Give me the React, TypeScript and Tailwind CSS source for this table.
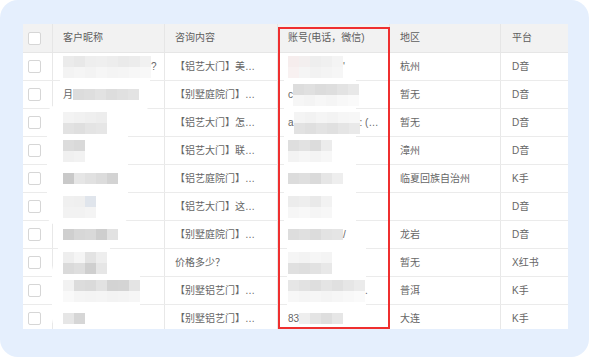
import React from "react";

type Blur = { lead?: string; rows: string[][]; tail?: string };

type Row = {
  name: Blur;
  topic: string;
  account: Blur;
  region: string;
  platform: string;
};

// Pixelated privacy masks: each entry is a row of 11px tiles.
const rows: Row[] = [
  {
    name: {
      rows: [
        ["bg-[#ebebeb]", "bg-[#e8e8e8]", "bg-[#eeeeee]", "bg-[#efefef]", "bg-[#ededed]", "bg-[#eaeaea]", "bg-[#ececec]", "bg-[#f1f1f1]"],
        ["bg-[#f3f3f3]", "bg-[#f5f5f5]", "bg-[#f3f3f3]", "bg-[#f6f6f6]", "bg-[#f4f4f4]", "bg-[#f5f5f5]", "bg-[#f7f7f7]", "bg-[#f8f8f8]"],
      ],
      tail: "?",
    },
    topic: "【铝艺大门】美…",
    account: {
      rows: [
        ["bg-[#f6eded]", "bg-[#f3efef]", "bg-[#eeeeee]", "bg-[#f0f0f0]", "bg-[#f4f4f4]"],
        ["bg-[#f8f1f1]", "bg-[#f5f5f5]", "bg-[#f2f2f2]", "bg-[#f4f4f4]", "bg-[#f6f6f6]"],
      ],
      tail: "'",
    },
    region: "杭州",
    platform: "D音",
  },
  {
    name: {
      lead: "月",
      rows: [["bg-[#dcdcdc]", "bg-[#dedede]", "bg-[#e2e2e2]", "bg-[#dddddd]", "bg-[#e0e0e0]", "bg-[#e3e3e3]"]],
    },
    topic: "【别墅庭院门】…",
    account: {
      lead: "c",
      rows: [
        ["bg-[#dddddd]", "bg-[#e0e0e0]", "bg-[#dcdcdc]", "bg-[#dedede]", "bg-[#e3e3e3]", "bg-[#e8e8e8]"],
        ["bg-[#f6f6f6]", "bg-[#f4f4f4]", "bg-[#f7f7f7]", "bg-[#f5f5f5]", "bg-[#f8f8f8]", "bg-[#fafafa]"],
      ],
    },
    region: "暂无",
    platform: "D音",
  },
  {
    name: {
      rows: [
        ["bg-[#f3f3f3]", "bg-[#f1f1f1]", "bg-[#efefef]", "bg-[#ededed]"],
        ["bg-[#e2e2e2]", "bg-[#dfdfdf]", "bg-[#e4e4e4]", "bg-[#e6e6e6]"],
      ],
    },
    topic: "【铝艺大门】怎…",
    account: {
      lead: "a",
      rows: [
        ["bg-[#f4f4f4]", "bg-[#f2f2f2]", "bg-[#f5f5f5]", "bg-[#f3f3f3]", "bg-[#f6f6f6]", "bg-[#f7f7f7]"],
        ["bg-[#e2e2e2]", "bg-[#dfdfdf]", "bg-[#e3e3e3]", "bg-[#e0e0e0]", "bg-[#e5e5e5]", "bg-[#e9e9e9]"],
      ],
      tail: ": (…",
    },
    region: "暂无",
    platform: "D音",
  },
  {
    name: {
      rows: [
        ["bg-[#dcdcdc]", "bg-[#d9d9d9]"],
        ["bg-[#f0f0f0]", "bg-[#f2f2f2]"],
      ],
    },
    topic: "【铝艺大门】联…",
    account: {
      rows: [
        ["bg-[#dedede]", "bg-[#e2e2e2]", "bg-[#dcdcdc]", "bg-[#ececec]"],
        ["bg-[#f3f3f3]", "bg-[#f6f6f6]", "bg-[#f4f4f4]", "bg-[#f7f7f7]"],
      ],
    },
    region: "漳州",
    platform: "D音",
  },
  {
    name: {
      rows: [["bg-[#c9c9c9]", "bg-[#e6e6e6]", "bg-[#e1e1e1]", "bg-[#dcdcdc]", "bg-[#d3d3d3]"]],
    },
    topic: "【铝艺庭院门】…",
    account: {
      rows: [["bg-[#dcdcdc]", "bg-[#dfdfdf]", "bg-[#dadada]", "bg-[#e6e6e6]", "bg-[#eeeeee]"]],
    },
    region: "临夏回族自治州",
    platform: "K手",
  },
  {
    name: {
      rows: [
        ["bg-[#f0f0f0]", "bg-[#efefef]", "bg-[#e0e5ec]"],
        ["bg-[#f2f2f2]", "bg-[#f2f2f2]", "bg-[#f4f4f4]"],
      ],
    },
    topic: "【铝艺大门】这…",
    account: {
      rows: [
        ["bg-[#ececec]", "bg-[#eeeeee]", "bg-[#e9e9e9]", "bg-[#f2f2f2]"],
        ["bg-[#f6f6f6]", "bg-[#f8f8f8]", "bg-[#f5f5f5]", "bg-[#f7f7f7]"],
      ],
    },
    region: "",
    platform: "D音",
  },
  {
    name: {
      rows: [["bg-[#cfcfcf]", "bg-[#d7d7d7]", "bg-[#d9d9d9]", "bg-[#cecece]", "bg-[#e2e2e2]"]],
    },
    topic: "【别墅庭院门】…",
    account: {
      rows: [["bg-[#dddddd]", "bg-[#e0e0e0]", "bg-[#dcdcdc]", "bg-[#e3e3e3]", "bg-[#e5e5e5]"]],
      tail: "/",
    },
    region: "龙岩",
    platform: "D音",
  },
  {
    name: {
      rows: [
        ["bg-[#eeeeee]", "bg-[#f5f5f5]", "bg-[#e3e3e3]", "bg-[#eeeeee]"],
        ["bg-[#dadada]", "bg-[#dedede]", "bg-[#cfcfcf]", "bg-[#e6e6e6]"],
      ],
    },
    topic: "价格多少？",
    account: {
      rows: [
        ["bg-[#f5f5f5]", "bg-[#f3f3f3]", "bg-[#f6f6f6]", "bg-[#f4f4f4]"],
        ["bg-[#e0e0e0]", "bg-[#dedede]", "bg-[#e2e2e2]", "bg-[#e8e8e8]"],
      ],
    },
    region: "暂无",
    platform: "X红书",
  },
  {
    name: {
      rows: [
        ["bg-[#f2f2f2]", "bg-[#dcdcdc]", "bg-[#dadada]", "bg-[#e2e2e2]", "bg-[#d3d3d3]", "bg-[#d4d4d4]", "bg-[#e4e4e4]"],
        ["bg-[#f9f9f9]", "bg-[#f5f5f5]", "bg-[#f4f4f4]", "bg-[#f5f5f5]", "bg-[#f3f3f3]", "bg-[#f4f4f4]", "bg-[#f6f6f6]"],
      ],
    },
    topic: "【别墅铝艺门】…",
    account: {
      rows: [
        ["bg-[#e6e6e6]", "bg-[#e2e2e2]", "bg-[#dedede]", "bg-[#e4e4e4]", "bg-[#e0e0e0]", "bg-[#e6e6e6]", "bg-[#ebebeb]"],
        ["bg-[#f7f7f7]", "bg-[#f5f5f5]", "bg-[#f6f6f6]", "bg-[#f4f4f4]", "bg-[#f6f6f6]", "bg-[#f8f8f8]", "bg-[#fafafa]"],
      ],
      tail: ".",
    },
    region: "普洱",
    platform: "K手",
  },
  {
    name: {
      rows: [["bg-[#e6e6e6]", "bg-[#d6d6d6]"]],
    },
    topic: "【别墅铝艺门】…",
    account: {
      lead: "83",
      rows: [["bg-[#eeeeee]", "bg-[#e4e4e4]", "bg-[#dedede]", "bg-[#e6e6e6]"]],
    },
    region: "大连",
    platform: "K手",
  },
];

const cols = "grid grid-cols-[30px_112px_113px_112px_111px_67px]";

function Checkbox() {
  return <span className="ml-[5px] block h-[13px] w-[13px] rounded-[2px] border border-[#d6d6d6] bg-white" />;
}

function Masked({ blur }: { blur: Blur }) {
  return (
    <span className="relative z-[2] flex items-center">
      {blur.lead && <span className="shrink-0">{blur.lead}</span>}
      <span className="flex flex-col">
        {blur.rows.map((r, i) => (
          <span key={i} className="flex">
            {r.map((c, j) => (
              <span key={j} className={`h-[11px] w-[11px] ${c}`} />
            ))}
          </span>
        ))}
      </span>
      {blur.tail && <span className="shrink-0 whitespace-nowrap">{blur.tail}</span>}
    </span>
  );
}

export default function App() {
  return (
    <div className="h-[358px] w-[590px] bg-white">
      <div
        className="h-[357px] w-[589px] rounded-[18px] bg-[#e5effd] pl-[23px] pt-[24px] text-[10px] leading-none text-[#666666]"
        style={{ fontFamily: '"Liberation Sans", "Noto Sans CJK SC", sans-serif' }}
      >
        <div className="relative h-[305px] w-[545px] overflow-hidden bg-white">
          {/* header */}
          <div className={`${cols} h-[29px] border-b border-[#e6e6e6] bg-[#f2f2f2] text-[#5e5e5e]`}>
            <div className="flex items-center border-r border-[#e6e6e6]">
              <Checkbox />
            </div>
            <div className="flex items-center border-r border-[#e6e6e6] px-[10px]">客户昵称</div>
            <div className="flex items-center border-r border-[#e6e6e6] px-[10px]">咨询内容</div>
            <div className="flex items-center border-r border-[#e6e6e6] px-[10px]">账号(电话，微信)</div>
            <div className="flex items-center border-r border-[#e6e6e6] px-[10px]">地区</div>
            <div className="flex items-center px-[11px]">平台</div>
          </div>

          {/* body */}
          {rows.map((r, i) => (
            <div key={i} className={`${cols} h-[28px] shrink-0 border-b border-[#ebebeb]`}>
              <div className="flex items-center border-r border-[#e8e8e8]">
                <Checkbox />
              </div>
              <div className="flex items-center border-r border-[#e8e8e8] pl-[10px]">
                <Masked blur={r.name} />
              </div>
              <div className="flex items-center whitespace-nowrap border-r border-[#e8e8e8] pl-[10px]">
                <span className="relative z-[2]">{r.topic}</span>
              </div>
              <div className="flex items-center border-r border-[#e8e8e8] pl-[10px]">
                <Masked blur={r.account} />
              </div>
              <div className="flex items-center whitespace-nowrap border-r border-[#e8e8e8] pl-[10px]">{r.region}</div>
              <div className="flex items-center whitespace-nowrap pl-[11px]">{r.platform}</div>
            </div>
          ))}

          {/* white smudges painted over the masked columns */}
          <div className="absolute left-[37px] top-[29px] z-[1] h-[59px] w-[90px] rounded-[10px] bg-white" />
          <div className="absolute left-[24px] top-[81px] z-[1] h-[120px] w-[81px] rounded-[10px] bg-white" />
          <div className="absolute left-[35px] top-[200px] z-[1] h-[38px] w-[52px] rounded-[6px] bg-white" />
          <div className="absolute left-[29px] top-[236px] z-[1] h-[69px] w-[88px] rounded-[10px] bg-white" />
          <div className="absolute left-[261px] top-[31px] z-[1] h-[195px] w-[72px] rounded-[12px] bg-white" />
          <div className="absolute left-[264px] top-[214px] z-[1] h-[91px] w-[79px] rounded-[10px] bg-white" />

          {/* highlight frame around the account column */}
          <div className="absolute bottom-0 left-[255px] top-[3px] z-[3] w-[112px] border-2 border-[#ef2f2f]" />
        </div>
      </div>
    </div>
  );
}
